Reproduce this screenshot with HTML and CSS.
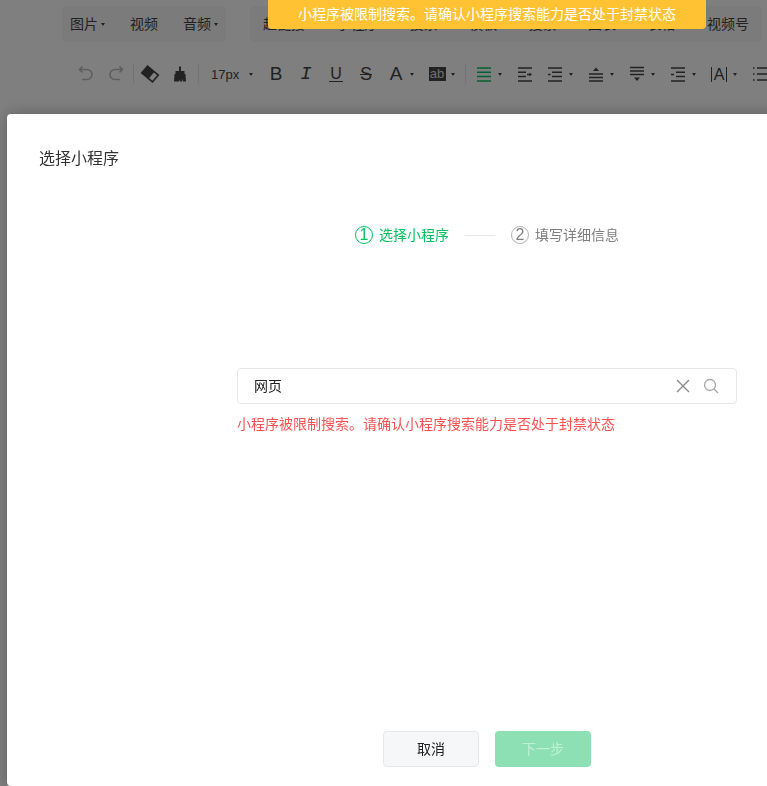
FILE: index.html
```html
<!DOCTYPE html>
<html>
<head>
  <meta charset="UTF-8">
  <link rel="stylesheet" href="styles.css">
</head>
<body>

  <div class="toolbar">
    <div class="menu-row">
      <div class="menu-group first-group">
        <span class="menu-item">图片<i class="caret"></i></span>
        <span class="menu-item">视频</span>
        <span class="menu-item">音频<i class="caret"></i></span>
      </div>
      <div class="menu-group second-group">
        <span class="menu-item">超链接</span>
        <span class="menu-item">小程序</span>
        <span class="menu-item">投票</span>
        <span class="menu-item">模板</span>
        <span class="menu-item">搜索</span>
        <span class="menu-item">图表</span>
        <span class="menu-item">表格</span>
        <span class="menu-item">视频号</span>
      </div>
    </div>

    <div class="tool-row">
      <span class="tool disabled">
        <svg width="20" height="20" viewBox="0 0 20 20"><path d="M6.5 2.5 3.5 5.5l3 3M3.5 5.5H11a5 5 0 0 1 0 10H6"/></svg>
      </span>
      <span class="tool disabled">
        <svg width="20" height="20" viewBox="0 0 20 20"><path d="M13.5 2.5l3 3-3 3M16.5 5.5H9a5 5 0 0 0 0 10h5"/></svg>
      </span>
      <span class="tool-divider"></span>
      <span class="tool">
        <svg width="20" height="20" viewBox="0 0 20 20">
          <g transform="rotate(40 10 10)">
            <rect class="solid" x="3" y="5.5" width="9" height="9"/>
            <rect x="3" y="5.5" width="14" height="9" stroke-width="1.6"/>
          </g>
        </svg>
      </span>
      <span class="tool">
        <svg width="20" height="20" viewBox="0 0 20 20"><path class="solid" d="M9 2.5h2V7h3.5v3h1l.5 7.5h-3l-.5-3-.5 3h-2l-.5-2-.5 2H4L4.500 10h1V7H9z"/></svg>
      </span>
      <span class="tool-divider narrow"></span>
      <span class="font-size">17px<i class="caret"></i></span>
      <span class="tool"><span class="glyph">B</span></span>
      <span class="tool"><span class="glyph slab">I</span></span>
      <span class="tool"><span class="glyph under">U</span></span>
      <span class="tool"><span class="glyph strike">S</span></span>
      <span class="tool has-caret"><span class="tool-icon"><span class="glyph">A</span></span><i class="caret"></i></span>
      <span class="tool has-caret"><span class="tool-icon"><span class="text-bg">ab</span></span><i class="caret"></i></span>
      <span class="tool-divider wide"></span>
      <span class="tool has-caret"><span class="tool-icon">
        <svg class="active" width="20" height="20" viewBox="0 0 20 20"><path d="M3 4h14M3 8.300h14M3 12.600h14M3 17h14"/></svg>
      </span><i class="caret"></i></span>
      <span class="tool">
        <svg width="20" height="20" viewBox="0 0 20 20"><path d="M3 4h14M3 8.300h8M3 12.600h8M3 17h14M12 10.500h3"/><path class="solid" d="M14.500 8.500l2.500 2-2.500 2z"/></svg>
      </span>
      <span class="tool has-caret"><span class="tool-icon">
        <svg width="20" height="20" viewBox="0 0 20 20"><path d="M3 4h14M7 8.300h10M7 12.600h10M3 17h14M3 10.500h2.500"/></svg>
      </span><i class="caret"></i></span>
      <span class="tool has-caret"><span class="tool-icon">
        <svg width="20" height="20" viewBox="0 0 20 20"><path class="solid" d="M10 3.500l3 3.500H7z"/><path d="M3 10h14M3 13.500h14M3 17h14"/></svg>
      </span><i class="caret"></i></span>
      <span class="tool has-caret"><span class="tool-icon">
        <svg width="20" height="20" viewBox="0 0 20 20"><path d="M3 3.500h14M3 7h14M3 10.500h14"/><path class="solid" d="M10 17l-3-3.500h6z"/></svg>
      </span><i class="caret"></i></span>
      <span class="tool has-caret"><span class="tool-icon">
        <svg width="20" height="20" viewBox="0 0 20 20"><path d="M3 4h14M8 8.300h9M8 12.600h9M3 17h14M3 10.500h3"/></svg>
      </span><i class="caret"></i></span>
      <span class="tool has-caret"><span class="tool-icon"><span class="glyph letter-space">A</span></span><i class="caret"></i></span>
      <span class="tool">
        <svg width="20" height="20" viewBox="0 0 20 20"><path d="M7 4h11M7 10h11M7 16h11M3 4h1.500M3 10h1.500M3 16h1.500"/></svg>
      </span>
    </div>
  </div>

  <div class="mask"></div>

  <div class="toast">小程序被限制搜索。请确认小程序搜索能力是否处于封禁状态</div>

  <div class="dialog">
    <div class="dialog-title">选择小程序</div>

    <div class="steps">
      <div class="step current"><span class="step-num">1</span><span class="step-text">选择小程序</span></div>
      <div class="step-line"></div>
      <div class="step"><span class="step-num">2</span><span class="step-text">填写详细信息</span></div>
    </div>

    <div class="search-area">
      <div class="search-box">
        <span class="search-text">网页</span>
        <svg class="clear-icon" width="16" height="16" viewBox="0 0 16 16"><path d="M2 2l12 12M14 2L2 14"/></svg>
        <svg class="search-icon" width="16" height="16" viewBox="0 0 16 16"><circle cx="7" cy="7" r="5.500"/><path d="M11 11l4 4"/></svg>
      </div>
      <div class="search-error">小程序被限制搜索。请确认小程序搜索能力是否处于封禁状态</div>
    </div>

    <div class="dialog-footer">
      <button class="btn btn-cancel">取消</button>
      <button class="btn btn-next">下一步</button>
    </div>
  </div>

</body>
</html>
```
FILE: styles.css
```css
html, body {
  height: 100%;
  overflow: hidden;
}
body {
  margin: 0;
  background-color: #fff;
  color: #444;
  font-family: "Noto Sans CJK SC", sans-serif;
  font-size: 14px;
}

/* editor toolbar, behind the mask */
.toolbar {
  width: 900px;
}
.menu-row {
  display: flex;
  padding: 6px 0 0 62px;
}
.menu-group {
  display: flex;
  align-items: center;
  justify-content: space-between;
  height: 36px;
  box-sizing: border-box;
  background-color: #f6f7f8;
  border-radius: 4px;
}
.first-group {
  width: 164px;
  padding: 0 8px;
}
.second-group {
  width: 512px;
  margin-left: 24px;
  padding: 0 13px;
}
.menu-item {
  display: flex;
  align-items: center;
  padding-bottom: 2px;
  line-height: 20px;
  white-space: nowrap;
}
.caret {
  display: block;
  width: 0;
  height: 0;
  border-left: 2.5px solid transparent;
  border-right: 2.5px solid transparent;
  border-top: 3px solid #444;
}
.menu-item .caret {
  margin: 2px 0 0 3px;
}

.tool-row {
  display: flex;
  align-items: center;
  height: 30px;
  margin-top: 17px;
  padding-left: 71px;
}
.tool {
  display: flex;
  align-items: center;
  justify-content: center;
  flex: none;
  width: 30px;
  height: 30px;
}
.tool.has-caret {
  justify-content: flex-start;
  width: 41px;
  padding-left: 4px;
  box-sizing: border-box;
}
.tool-icon {
  display: flex;
  align-items: center;
  justify-content: center;
  width: 22px;
  height: 30px;
  margin-right: 3px;
}
.tool-divider {
  flex: none;
  width: 1px;
  height: 20px;
  margin: 0 1px 0 2px;
  background-color: #e4e8eb;
}
.tool-divider.narrow {
  margin: 0 2px 0 3px;
}
.tool-divider.wide {
  margin: 0 3px 0 2px;
}
.tool svg {
  display: block;
  fill: none;
  stroke: #444;
  stroke-width: 1.5;
}
.tool .solid {
  fill: #444;
  stroke: none;
}
.tool.disabled svg {
  stroke: #bbb;
  stroke-width: 1.6;
}
.tool svg.active {
  stroke: #07c160;
  stroke-width: 1.5;
}
.font-size {
  display: flex;
  align-items: center;
  flex: none;
  width: 60px;
  padding-left: 10px;
  box-sizing: border-box;
  font-family: "Liberation Sans", sans-serif;
  font-size: 13px;
}
.font-size .caret {
  margin-left: 10px;
}
.glyph {
  font-family: "Liberation Sans", sans-serif;
  font-size: 19px;
  line-height: 20px;
  font-weight: normal;
}
.glyph.slab {
  font-family: "Liberation Mono", monospace;
  font-style: italic;
  font-size: 19px;
}
.glyph.under {
  font-size: 16px;
  line-height: 14px;
  padding: 0 1px;
  border-bottom: 1.5px solid #444;
}
.glyph.strike {
  font-size: 18px;
  text-decoration: line-through;
  text-decoration-thickness: 1.3px;
}
.glyph.letter-space {
  font-size: 16px;
  line-height: 15px;
  padding: 0 2px;
  border-left: 1.5px solid #444;
  border-right: 1.5px solid #444;
}
.text-bg {
  width: 17px;
  height: 14px;
  background-color: #444;
  color: #ddd;
  font-family: "Liberation Sans", sans-serif;
  font-size: 13px;
  line-height: 13px;
  text-align: center;
}

.mask {
  position: fixed;
  top: 0;
  left: 0;
  right: 0;
  bottom: 0;
  background-color: rgba(0, 0, 0, 0.5);
}

.toast {
  position: fixed;
  top: 0;
  left: 268px;
  z-index: 3;
  padding: 0 30px;
  height: 29px;
  line-height: 27px;
  background-color: #ffc233;
  color: #fff;
  border-radius: 0 0 4px 4px;
  white-space: nowrap;
}

/* dialog, wider than the window so its right side is cut off */
.dialog {
  position: fixed;
  top: 114px;
  left: 7px;
  z-index: 2;
  display: flex;
  flex-direction: column;
  width: 960px;
  height: 672px;
  padding: 32px 32px 19px;
  box-sizing: border-box;
  background-color: #fff;
  border-radius: 4px;
  box-shadow: 0 0 16px rgba(0, 0, 0, 0.25);
}
.dialog-title {
  padding-bottom: 2px;
  font-size: 16px;
  line-height: 22px;
  color: #333;
}

.steps {
  display: flex;
  align-items: center;
  justify-content: center;
  gap: 16px;
  margin-top: 53px;
}
.step {
  display: flex;
  align-items: center;
  gap: 6px;
  color: #7f7f7f;
}
.step-text {
  padding-bottom: 2px;
  line-height: 22px;
}
.step.current {
  color: #07c160;
}
.step-num {
  width: 18px;
  height: 18px;
  box-sizing: border-box;
  border: 1px solid #b2b2b2;
  border-radius: 50%;
  font-family: "Liberation Sans", sans-serif;
  font-size: 16px;
  font-weight: normal;
  line-height: 16px;
  text-align: center;
}
.step.current .step-num {
  border-color: #07c160;
}
.step-line {
  width: 30px;
  height: 1px;
  background-color: #e4e8eb;
}

.search-area {
  width: 500px;
  margin: 121px auto 0;
}
.search-box {
  display: flex;
  align-items: center;
  height: 36px;
  padding: 0 17px 0 16px;
  box-sizing: border-box;
  border: 1px solid #e4e8eb;
  border-radius: 4px;
}
.search-text {
  flex: 1;
  padding-bottom: 2px;
  color: #222;
}
.search-box svg {
  fill: none;
  stroke-width: 1.3;
}
.clear-icon {
  stroke: #888;
}
.search-icon {
  margin-left: 12px;
  stroke: #a5a5a5;
}
.search-error {
  margin-top: 9px;
  padding-bottom: 2px;
  line-height: 20px;
  color: #fa5151;
  white-space: nowrap;
}

.dialog-footer {
  display: flex;
  justify-content: center;
  gap: 16px;
  margin-top: auto;
}
.btn {
  width: 96px;
  height: 36px;
  padding: 0 0 2px;
  border-radius: 4px;
  font-family: "Noto Sans CJK SC", sans-serif;
  font-size: 14px;
}
.btn-cancel {
  background-color: #f6f7f9;
  border: 1px solid #e4e8eb;
  color: #222;
}
.btn-next {
  background-color: #8ce0b4;
  border: none;
  color: #c3efd7;
}
```
